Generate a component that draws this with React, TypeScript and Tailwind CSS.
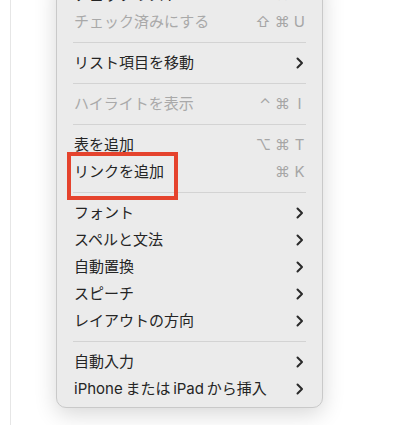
type Item =
  | { kind: "sep" }
  | { kind: "item"; label: string; keys?: string[]; disabled?: boolean; sub?: boolean };

const items: Item[] = [
  { kind: "item", label: "チェックリスト", keys: ["⇧", "⌘", "L"] },
  { kind: "item", label: "チェック済みにする", keys: ["⇧", "⌘", "U"], disabled: true },
  { kind: "sep" },
  { kind: "item", label: "リスト項目を移動", sub: true },
  { kind: "sep" },
  { kind: "item", label: "ハイライトを表示", keys: ["⌃", "⌘", "I"], disabled: true },
  { kind: "sep" },
  { kind: "item", label: "表を追加", keys: ["⌥", "⌘", "T"] },
  { kind: "item", label: "リンクを追加", keys: ["⌘", "K"] },
  { kind: "sep" },
  { kind: "item", label: "フォント", sub: true },
  { kind: "item", label: "スペルと文法", sub: true },
  { kind: "item", label: "自動置換", sub: true },
  { kind: "item", label: "スピーチ", sub: true },
  { kind: "item", label: "レイアウトの方向", sub: true },
  { kind: "sep" },
  { kind: "item", label: "自動入力", sub: true },
  { kind: "item", label: "iPhone\u2009または\u2009iPad\u2009から挿入", sub: true },
];

function Chevron() {
  return (
    <svg width="8" height="12" viewBox="0 0 8 12" className="mr-[1px]">
      <polyline
        points="1.5,1.5 6,6 1.5,10.5"
        fill="none"
        stroke="#2a2a2a"
        strokeWidth="2"
        strokeLinecap="round"
        strokeLinejoin="round"
      />
    </svg>
  );
}

function Row({ item }: { item: Extract<Item, { kind: "item" }> }) {
  return (
    <div className="flex h-[27px] items-center justify-between px-[17px]">
      <span
        className={`text-[15px] leading-none ${
          item.disabled ? "text-[#a9a9a9]" : "text-[#252525]"
        }`}
      >
        {item.label}
      </span>
      {item.sub ? (
        <Chevron />
      ) : (
        <span className="flex items-center gap-[4px] text-[15px] leading-none text-[#a6a6a6] font-['Inter','DejaVu_Sans',sans-serif]">
          {item.keys?.map((k, i) => (
            <span key={i} className="inline-block min-w-[11px] text-center">
              {k}
            </span>
          ))}
        </span>
      )}
    </div>
  );
}

export default function App() {
  return (
    <div className="relative h-[425px] w-[400px] overflow-hidden bg-white font-['Inter','Noto_Sans_CJK_JP',sans-serif]">
      <div className="ml-[10px] flex h-full flex-col items-start border-l border-[#e6e6e6] pl-[45px]">
        <div className="-mt-[25px] w-[267px] shrink-0 rounded-[10px] border border-[#c9c9c9] bg-[#ebebeb] py-[5px] shadow-[0_6px_22px_rgba(0,0,0,0.16)]">
          {items.map((it, i) =>
            it.kind === "sep" ? (
              <div key={i} className="flex h-[14px] items-center px-[16px]">
                <div className="h-px w-full bg-[#d3d3d3]" />
              </div>
            ) : (
              <Row key={i} item={it} />
            )
          )}
        </div>
      </div>
      <div className="absolute left-[67px] top-[152px] h-[48px] w-[111px] border-[4px] border-[#e5432d]" />
    </div>
  );
}
